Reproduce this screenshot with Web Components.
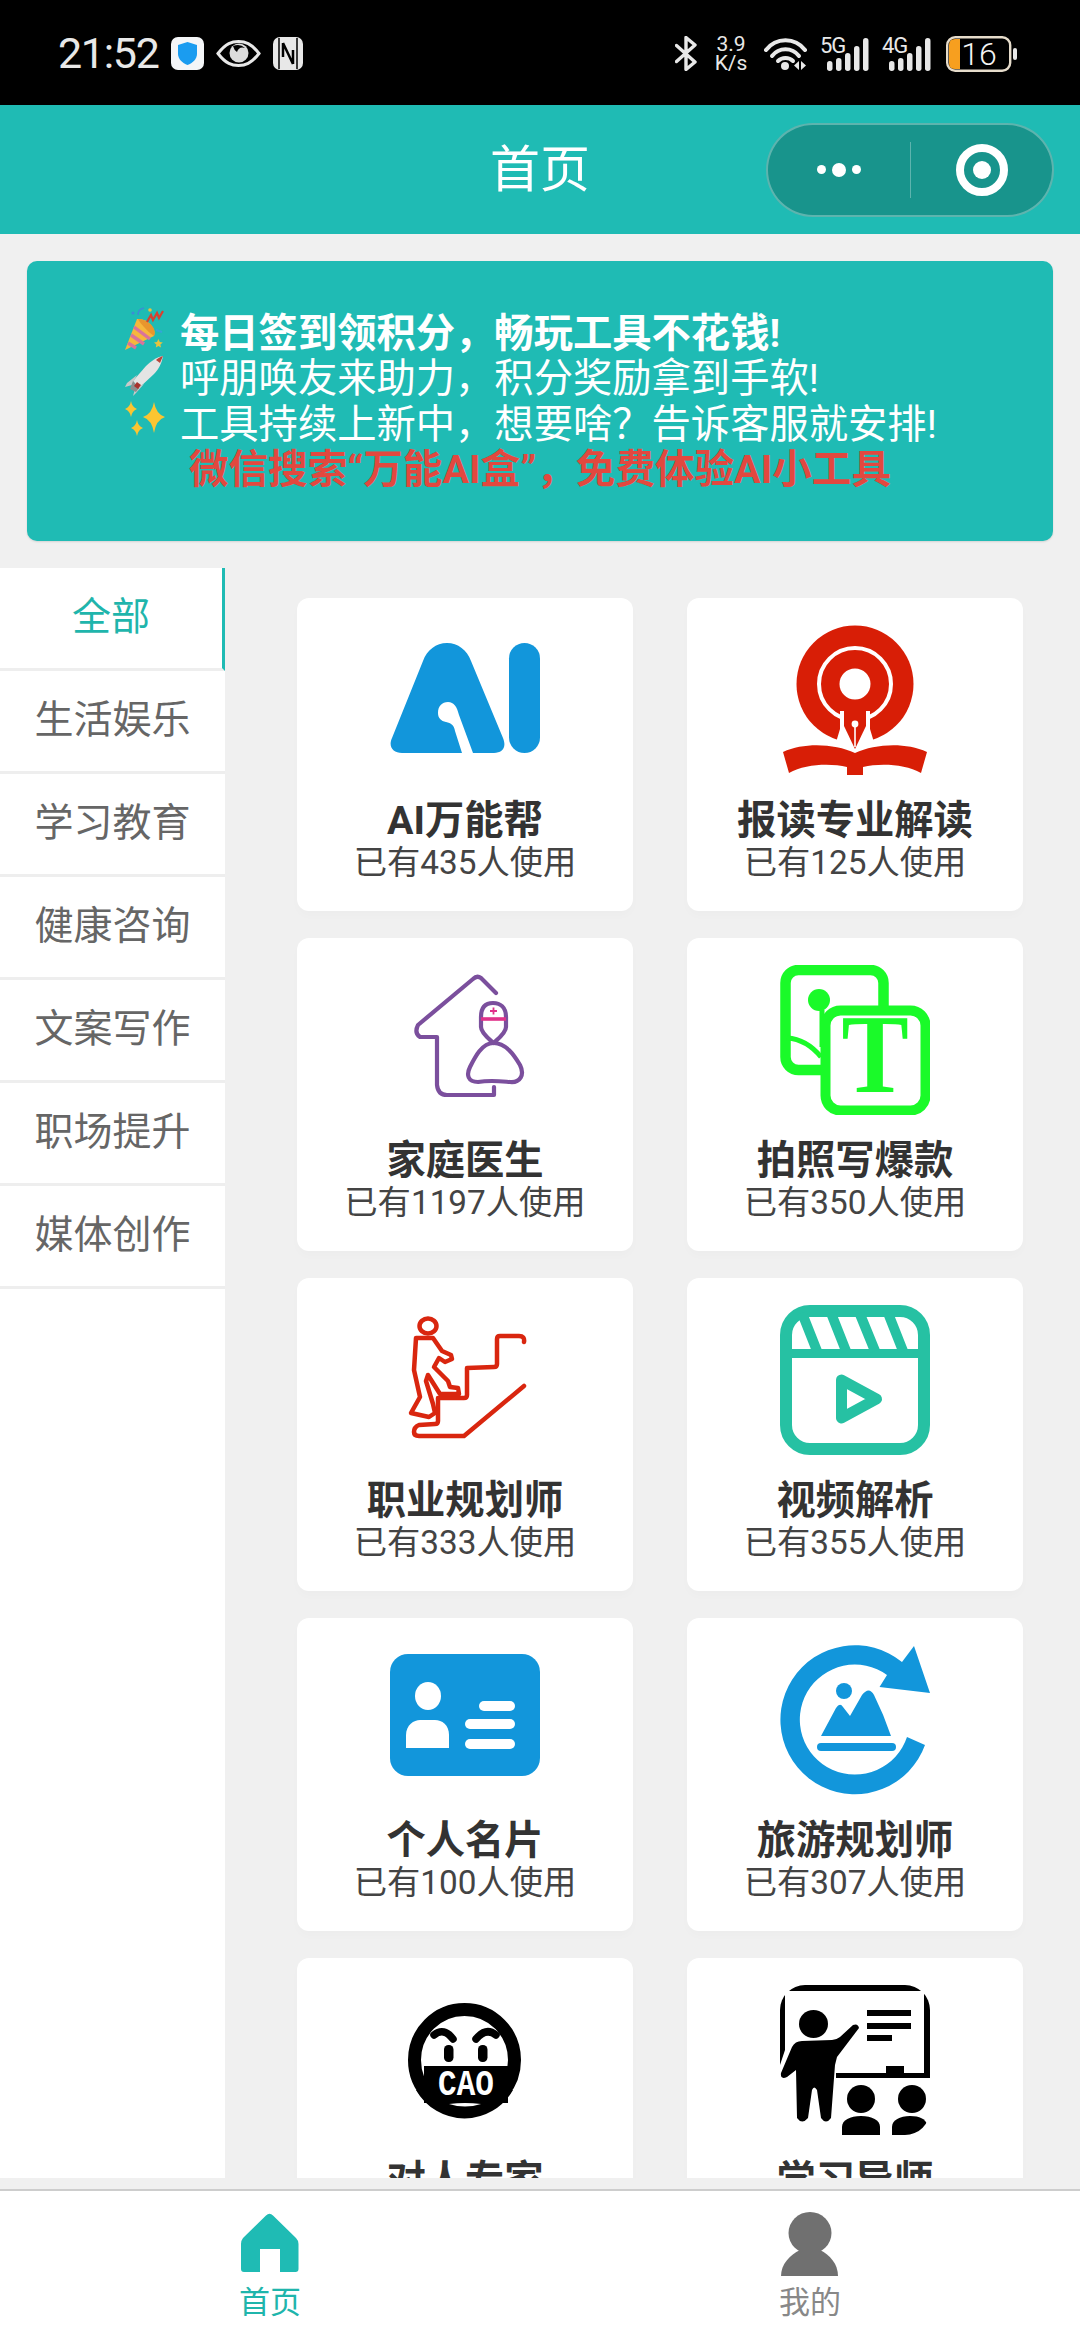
<!DOCTYPE html>
<html lang="zh">
<head>
<meta charset="utf-8">
<title>首页</title>
<style>
    html, body { margin: 0; padding: 0; }
    body { width: 1080px; height: 2340px; overflow: hidden; display: flex; flex-direction: column; background: #f0f0f0; font-family: Roboto, "Noto Sans CJK SC", sans-serif; }
    .stack { position: relative; display: block; width: 150px; height: 150px; }
    .stack svg { display: block; }
    .stack span { position: absolute; text-align: center; white-space: nowrap; }
    .big-t { left: 45px; top: 28px; width: 100px; font: 700 112px/122px "Liberation Serif", serif; color: #1afa29; transform: scaleX(0.9); }
    .cao { left: 34px; top: 82px; width: 84px; font: 700 31px/35px "Liberation Mono", monospace; color: #fff; transform: scaleY(1.2); }
</style>
</head>
<body>
<status-bar></status-bar>
<nav-bar heading="首页"></nav-bar>

<promo-banner>
    <promo-line strong>
        <svg slot="emoji" width="41" height="46" viewBox="0 0 41 46">
            <path d="M1 44 L13 13 Q21 12 27 19 Q32 25 30 30 Z" fill="#f6b73c"/>
            <path d="M4 37 L12 42 M7 29 L20 38 M10 21 L26 33" stroke="#d9739b" stroke-width="3.4" fill="none"/>
            <path d="M14 13 Q23 13 29 21 Q32 26 30 30 Q24 26 20 21 Q16 17 14 13Z" fill="#e8962e"/>
            <path d="M23 16 L27 9 L29 14 L33 7 L35 12 L39 5" stroke="#d8402f" stroke-width="2.2" fill="none"/>
            <path d="M14 9 Q14 3 20 2" stroke="#3c8dd6" stroke-width="1.6" fill="none"/>
            <circle cx="26" cy="4" r="1.8" fill="#e9c33c"/><circle cx="9" cy="7" r="1.6" fill="#3c8dd6"/>
            <path d="M32 24 L38 26" stroke="#35a4d8" stroke-width="2"/>
            <path d="M33 36 l1.4 -3 1.4 3 3 .6 -2.4 2 .6 3 -2.6 -1.6 -2.6 1.6 .6 -3 -2.4 -2z" fill="#e9c33c"/>
        </svg>
        每日签到领积分，畅玩工具不花钱!
    </promo-line>
    <promo-line>
        <svg slot="emoji" width="41" height="46" viewBox="0 0 41 46">
            <path d="M39 4 C33 5 27 9 22 14 L9 29 L15 36 L30 22 C35 17 38 10 39 4Z" fill="#e4e4e4"/>
            <path d="M39 4 C36 5 34 6 32 8 L36 11 C37 9 38 6 39 4Z" fill="#b9463c"/>
            <path d="M13 23 L3 31 L1 35 L8 33 Z M20 32 L12 41 L9 44 L11 37 Z" fill="#c9c9c9"/>
            <path d="M9 29 L6 37 L12 40 L15 36 Z" fill="#8d8d8d"/>
            <path d="M13 30 L17 33 L14 37 L10 34Z" fill="#a8322c"/>
        </svg>
        呼朋唤友来助力，积分奖励拿到手软!
    </promo-line>
    <promo-line>
        <svg slot="emoji" width="41" height="46" viewBox="0 0 41 46">
            <path d="M30 5 Q32 17 41 20 Q32 23 30 36 Q28 23 19 20 Q28 17 30 5Z" fill="#fbc531"/>
            <path d="M7 4 Q8 10 13 12 Q8 14 7 20 Q6 14 1 12 Q6 10 7 4Z" fill="#fbc531"/>
            <path d="M13 23 Q14 29 19 31 Q14 33 13 39 Q12 33 7 31 Q12 29 13 23Z" fill="#fbc531"/>
        </svg>
        工具持续上新中，想要啥？告诉客服就安排!
    </promo-line>
    <promo-line ad>微信搜索“万能AI盒”，免费体验AI小工具</promo-line>
</promo-banner>

<main-area>
    <side-menu slot="side">
        <side-item active>全部</side-item>
        <side-item>生活娱乐</side-item>
        <side-item>学习教育</side-item>
        <side-item>健康咨询</side-item>
        <side-item>文案写作</side-item>
        <side-item>职场提升</side-item>
        <side-item>媒体创作</side-item>
    </side-menu>

    <tool-card name="AI万能帮" count="435">
        <svg slot="icon" width="150" height="150" viewBox="0 0 150 150">
            <path d="M33 36 C37 25 46 18 57 18 C68 18 77 25 81 36 L113 113 C117 123 112 128 104 128 L84 128 L69 128 L12 128 C3 128 -2 122 2 113 Z" fill="#1296db"/>
            <path d="M48 88 C48 81 52 77 58 77 C64 77 67 82 69 90 L83 128 L72 128 L65 106 C64 100 61 98 56 97 C51 96 48 93 48 88Z" fill="#fff"/>
            <rect x="119" y="18" width="31" height="110" rx="15.5" fill="#1296db"/>
        </svg>
    </tool-card>
    <tool-card name="报读专业解读" count="125">
        <svg slot="icon" width="150" height="150" viewBox="0 0 150 150">
            <circle cx="75" cy="59" r="58.500" fill="#d81e06"/>
            <circle cx="75" cy="59" r="36" fill="none" stroke="#fff" stroke-width="4"/>
            <circle cx="75" cy="59" r="15.500" fill="#fff"/>
            <path d="M60 86 L90 86 L90 104 L96 124 L54 124 L60 104Z" fill="#fff"/>
            <path d="M64 84 L86 84 L86 101 L75 124 L64 101Z" fill="#d81e06"/>
            <circle cx="75" cy="99" r="3.400" fill="#fff"/>
            <path d="M75 99 L75 122" stroke="#fff" stroke-width="1.600"/>
            <path d="M3 127 C25 117 55 119 75 128 C95 119 125 117 147 127 L141 148 C125 139 100 138 83 142 L83 150 L67 150 L67 142 C50 138 25 139 9 148Z" fill="#d81e06"/>
        </svg>
    </tool-card>
    <tool-card name="家庭医生" count="1197">
        <svg slot="icon" width="150" height="150" viewBox="0 0 150 150">
            <g fill="none" stroke="#7b4f9d" stroke-width="4.200" stroke-linecap="round" stroke-linejoin="round">
                <path d="M106 28 L91 13 Q87 10 83 14 L28 60 Q24 68 30 72 L47 72 L47 120 Q48 130 57 130 L104 130 L104 122"/>
                <path d="M91 52 C91 42 96 38 103 38 C110 38 116 42 116 52 L116 62 C116 68 108 74 103.500 78 C99 74 91 68 91 62Z"/>
                <path d="M103.500 78 C92 78 85 92 80 102 C76 110 78 117 88 117 C100 115 108 116 120 117 C130 118 135 110 130 100 C124 90 116 78 103.500 78Z"/>
            </g>
            <path d="M91 54 H116" stroke="#e0328a" stroke-width="3.600"/>
            <path d="M103.500 42.500 V49.500 M100 46 H107" stroke="#e0328a" stroke-width="1.800"/>
        </svg>
    </tool-card>
    <tool-card name="拍照写爆款" count="350">
        <span slot="icon" class="stack">
            <svg width="150" height="150" viewBox="0 0 150 150">
                <rect x="5.500" y="5" width="98" height="100" rx="13" fill="#fff" stroke="#1afa29" stroke-width="10.500"/>
                <circle cx="39" cy="35" r="11" fill="#1afa29"/>
                <path d="M42 45 V82 M7 73 C22 74 33 82 41 92" fill="none" stroke="#1afa29" stroke-width="5"/>
                <rect x="45.500" y="45.500" width="100" height="100" rx="15" fill="#fff" stroke="#1afa29" stroke-width="10"/>
            </svg>
            <span class="big-t">T</span>
        </span>
    </tool-card>
    <tool-card name="职业规划师" count="333">
        <svg slot="icon" width="150" height="150" viewBox="0 0 150 150">
            <g fill="none" stroke="#d9260f" stroke-width="4.500" stroke-linecap="round" stroke-linejoin="round">
                <ellipse cx="38" cy="21" rx="8.500" ry="7.500"/>
                <path d="M134 37 Q135 31 129 31 L110 31 Q107 31 107 34 L107 59 Q107 62 104 62 L77 63 L77 90 Q77 93 74 93 L48 93 L48 116 Q48 119 45 119 L29 120 Q24 122 24 127 Q24 131 29 131 L74 131 L134 81"/>
                <path d="M26 33 L43 33 L52 46 L61 50 L62 54 L55 57 L49 53 L44 62 L58 76 L60 82 L68 83 L69 89 L50 89 L38 70 L36 76 L43 99 L45 108 L39 112 L21 108 L30 92 L24 65 Z"/>
            </g>
        </svg>
    </tool-card>
    <tool-card name="视频解析" count="355">
        <svg slot="icon" width="150" height="150" viewBox="0 0 150 150">
            <g fill="none" stroke="#26c1a3" stroke-linejoin="round">
                <rect x="6" y="6" width="138" height="138" rx="24" stroke-width="12"/>
                <path d="M6 48.500 H144" stroke-width="9"/>
                <path d="M22 8 L37 46 M51 8 L66 46 M79.500 8 L95 46 M108 8 L123 46" stroke-width="10"/>
                <path d="M61.500 75 L96.500 94 L61.500 113 Z" stroke-width="11"/>
            </g>
        </svg>
    </tool-card>
    <tool-card name="个人名片" count="100">
        <svg slot="icon" width="150" height="150" viewBox="0 0 150 150">
            <rect x="0" y="9" width="150" height="122" rx="18" fill="#1296db"/>
            <ellipse cx="38" cy="51" rx="13" ry="14" fill="#fff"/>
            <path d="M16 103 V90 C16 80 24 75 30 75 H45 C52 75 59 80 59 90 V103Z" fill="#fff"/>
            <rect x="89" y="56" width="36" height="10" rx="5" fill="#fff"/>
            <rect x="75" y="74" width="50" height="10" rx="5" fill="#fff"/>
            <rect x="75" y="94" width="50" height="10" rx="5" fill="#fff"/>
        </svg>
    </tool-card>
    <tool-card name="旅游规划师" count="307">
        <svg slot="icon" width="150" height="150" viewBox="0 0 150 150">
            <path d="M145 100 A74.500 74.500 0 1 1 122 17 L134 1 L150 48 L99.500 42 L107 30 A55 55 0 1 0 127 92Z" fill="#1296db"/>
            <ellipse cx="64" cy="46" rx="8" ry="8" fill="#1296db"/>
            <path d="M41 91 L56 63 Q60 57 63 62 L70 71 L82 50 Q89 41 94 50 Q104 70 111 91Z" fill="#1296db"/>
            <rect x="37" y="98" width="79" height="8" rx="4" fill="#1296db"/>
        </svg>
    </tool-card>
    <tool-card name="对人专家" count="0">
        <span slot="icon" class="stack">
            <svg width="150" height="150" viewBox="0 0 150 150">
                <ellipse cx="74.500" cy="75" rx="50" ry="50.500" fill="none" stroke="#000" stroke-width="13"/>
                <path d="M26 105 A56 57 0 0 0 123 105Z" fill="#000"/>
                <rect x="34" y="81" width="84" height="37" fill="#000"/>
                <path d="M59 119 Q75 124 91 119 Q75 117 59 119Z" fill="#fff"/>
                <path d="M44 50 Q54 42 63 54 M106 50 Q96 42 86 54" fill="none" stroke="#000" stroke-width="7.500" stroke-linecap="round"/>
                <rect x="54" y="60" width="9.500" height="17" rx="4.500" fill="#000"/>
                <rect x="88" y="60" width="9.500" height="17" rx="4.500" fill="#000"/>
            </svg>
            <span class="cao">CAO</span>
        </span>
    </tool-card>
    <tool-card name="学习导师" count="0">
        <svg slot="icon" width="150" height="150" viewBox="0 0 150 150" style="border-radius:25px;overflow:hidden">
            <path d="M0 0 H150 V93 H56 V88 H106 V81 H124 V88 H144 V6 H5 V65 L0 80Z" fill="#000"/>
            <rect x="87" y="25" width="44" height="6"/><rect x="87" y="38" width="44" height="6"/><rect x="87" y="50" width="25" height="6"/>
            <ellipse cx="33.500" cy="39" rx="14.500" ry="14"/>
            <path d="M22 56 L52 55 Q56 55 60 52 L73 40 Q78 38 79 43 L57 72 L55 80 L51 133 Q46 140 41 133 L37 105 Q34 100 32 105 L28 133 Q22 140 17 133 L16 85 L7 92 Q0 95 1 88 L12 62 Q15 56 22 56Z"/>
            <ellipse cx="81" cy="114" rx="14" ry="14"/><ellipse cx="132" cy="114" rx="14" ry="14"/>
            <path d="M62 150 V142 C62 135 70 131 81 131 C92 131 100 135 100 142 V150Z"/>
            <path d="M112 150 V142 C112 135 120 131 130 131 C140 131 145 134 147 139 L138 150Z"/>
        </svg>
    </tool-card>
</main-area>

<tab-bar>
    <tab-item active label="首页">
        <svg slot="icon" width="64" height="64" viewBox="0 0 64 64">
            <path d="M28 3.500 Q31.500 0 35 3.500 L58 26 Q60.500 28.500 60.500 32 L60.500 57 Q60.500 60 57.500 60 L42 60 L42 37 L22 37 L22 60 L6 60 Q3 60 3 57 L3 32 Q3 28.500 5 26Z" fill="#1fbbb4"/>
        </svg>
    </tab-item>
    <tab-item label="我的">
        <svg slot="icon" width="64" height="64" viewBox="0 0 64 64">
            <ellipse cx="32" cy="21" rx="21.500" ry="21" fill="#707070"/>
            <path d="M3 64 C3 52 12 43 22 38 L42 38 C52 43 60 52 60 64Z" fill="#707070"/>
        </svg>
    </tab-item>
</tab-bar>

<script>
const FONT = `Roboto, "Noto Sans CJK SC", sans-serif`;
const TEAL = '#1fbbb4';

class StatusBar extends HTMLElement {
    constructor() {
        super();
        this.attachShadow({ mode: 'open' });
    }

    signal(label) {
        return `
        <span class="signal">
            <b>${label}</b>
            <svg width="50" height="34" viewBox="0 0 50 34">
                <rect x="7" y="24" width="5.500" height="10" rx="2.700" fill="#e8e8e8"/>
                <rect x="16" y="21" width="5.500" height="13" rx="2.700" fill="#e8e8e8"/>
                <rect x="25" y="16" width="5.500" height="18" rx="2.700" fill="#e8e8e8"/>
                <rect x="34" y="9" width="5.500" height="25" rx="2.700" fill="#e8e8e8"/>
                <rect x="43" y="1" width="5.500" height="33" rx="2.700" fill="#e8e8e8"/>
            </svg>
        </span>`;
    }

    connectedCallback() {
        this.shadowRoot.innerHTML = `
        <style>
            :host { display: flex; flex: none; height: 105px; background: #000; color: #e8e8e8; font-family: Roboto, sans-serif; align-items: flex-start; justify-content: space-between; padding: 36px 63px 0 58px; box-sizing: border-box; }
            .side { display: flex; align-items: center; height: 35px; }
            .left { gap: 12px; }
            .right { gap: 13px; }
            .time { font-size: 43px; font-weight: 400; line-height: 35px; letter-spacing: -1.300px; }
            .speed { width: 34px; font-size: 21px; line-height: 19px; text-align: center; margin: 0 3px 0 2px; }
            .signal { position: relative; display: block; width: 50px; height: 34px; }
            .signal b { position: absolute; left: 0; top: -2px; font-size: 22px; font-weight: 400; line-height: 22px; letter-spacing: -1px; }
            .battery { position: relative; display: block; width: 71px; height: 36px; margin-left: 1px; }
            .battery b { position: absolute; left: 15px; top: 0; width: 36px; text-align: center; font-size: 32px; font-weight: 300; line-height: 36px; color: #f4f4f4; }
            svg { display: block; }
        </style>
        <div class="side left">
            <span class="time">21:52</span>
            <svg width="33" height="33" viewBox="0 0 33 33">
                <rect width="33" height="33" rx="7" fill="#f4f6f8"/>
                <path d="M16.500 5 L26 8 V17 C26 22 21.500 26 16.500 28 C11.500 26 7 22 7 17 V8Z" fill="#1a9cf0"/>
            </svg>
            <svg width="45" height="27" viewBox="0 0 45 27">
                <path d="M2 13.500 C10 3 16 1.500 22.500 1.500 C29 1.500 35 3 43 13.500 C35 24 29 25.500 22.500 25.500 C16 25.500 10 24 2 13.500Z" fill="none" stroke="#e8e8e8" stroke-width="3"/>
                <circle cx="23" cy="13" r="9.500" fill="#dcdcdc"/>
                <path d="M17 6 Q24 3 29 8 Q23 6 21 12 Q18 10 17 6Z" fill="#000"/>
            </svg>
            <svg width="30" height="33" viewBox="0 0 30 33">
                <rect width="30" height="33" rx="7" fill="#e8e8e8"/>
                <path d="M6 1 V32 M24 1 V32" stroke="#000" stroke-width="1.500"/>
                <path d="M10 6 L20 27 M10 6 V20 M20 27 V13" stroke="#000" stroke-width="2.500" fill="none"/>
            </svg>
        </div>
        <div class="side right">
            <svg width="22" height="35" viewBox="0 0 22 35" style="margin-right:2px">
                <path d="M1.500 9.500 L20 26 L11 33.500 V1.500 L20 9 L1.500 25.500" fill="none" stroke="#e8e8e8" stroke-width="3.400" stroke-linejoin="round" stroke-linecap="round"/>
            </svg>
            <div class="speed"><div>3.9</div><div>K/s</div></div>
            <svg width="43" height="34" viewBox="0 0 43 34">
                <g fill="none" stroke="#e8e8e8" stroke-width="4" stroke-linecap="round">
                    <path d="M2 13 C12 0 31 0 41 13"/><path d="M8 19 C15 10 28 10 35 19"/><path d="M14 24 C18 20 25 20 29 24"/>
                </g>
                <circle cx="21" cy="29" r="4" fill="#e8e8e8"/>
                <path d="M35 24 V33 L30 28.500Z M37 24 V33 L42 28.500Z" fill="#e8e8e8"/>
            </svg>
            <span style="display:flex;gap:12px">${this.signal('5G')}${this.signal('4G')}</span>
            <span class="battery">
                <svg width="71" height="36" viewBox="0 0 71 36">
                    <rect x="1.200" y="1.200" width="63" height="33.600" rx="8" fill="none" stroke="#e6dccb" stroke-width="2.400"/>
                    <path d="M14 3 V33 H9 Q3 33 3 27 V9 Q3 3 9 3Z" fill="#f79f1f"/>
                    <rect x="67" y="12" width="4" height="12" rx="2" fill="#e8e8e8"/>
                </svg>
                <b>16</b>
            </span>
        </div>`;
    }
}
customElements.define('status-bar', StatusBar);

class NavBar extends HTMLElement {
    constructor() {
        super();
        this.attachShadow({ mode: 'open' });
    }

    connectedCallback() {
        this.shadowRoot.innerHTML = `
        <style>
            :host { display: grid; flex: none; grid-template-columns: 1fr auto 1fr; align-items: center; height: 129px; background: ${TEAL}; color: #fff; padding: 0 26px; box-sizing: border-box; font-family: ${FONT}; }
            h1 { grid-column: 2; margin: 0; font-size: 50px; font-weight: 400; line-height: 60px; }
            .capsule { grid-column: 3; justify-self: end; display: flex; align-items: center; width: 288px; height: 94px; box-sizing: border-box; border: 2px solid rgba(255,255,255,0.3); border-radius: 47px; background: #18948c; }
            .menu, .close { display: flex; align-items: center; justify-content: center; }
            .menu { width: 142px; height: 56px; gap: 6px; border-right: 1px solid rgba(255,255,255,0.3); }
            .close { flex: 1; }
            .dot { width: 9px; height: 9px; border-radius: 50%; background: #fff; }
            .dot.big { width: 14px; height: 14px; }
            .target { width: 52px; height: 52px; border-radius: 50%; border: 8px solid #fff; box-sizing: border-box; display: flex; align-items: center; justify-content: center; }
            .target i { display: block; width: 18px; height: 18px; border-radius: 50%; background: #fff; }
        </style>
        <h1>${this.getAttribute('heading')}</h1>
        <div class="capsule">
            <div class="menu"><span class="dot"></span><span class="dot big"></span><span class="dot"></span></div>
            <div class="close"><div class="target"><i></i></div></div>
        </div>`;
    }
}
customElements.define('nav-bar', NavBar);

class PromoBanner extends HTMLElement {
    constructor() {
        super();
        this.attachShadow({ mode: 'open' });
    }

    connectedCallback() {
        this.shadowRoot.innerHTML = `
        <style>
            :host { display: flex; flex: none; flex-direction: column; justify-content: center; height: 280px; margin: 27px 27px 27px; background: ${TEAL}; border-radius: 10px; box-sizing: border-box; padding-bottom: 7px; box-shadow: 0 1px 2px rgba(0,0,0,0.12); }
        </style>
        <slot></slot>`;
    }
}
customElements.define('promo-banner', PromoBanner);

class PromoLine extends HTMLElement {
    constructor() {
        super();
        this.attachShadow({ mode: 'open' });
    }

    connectedCallback() {
        this.shadowRoot.innerHTML = `
        <style>
            :host { display: flex; align-items: center; gap: 15px; padding-left: 97px; height: 45.5px; color: #fff; font-family: ${FONT}; font-size: 39.3px; white-space: nowrap; }
            :host([strong]) { font-weight: 700; }
            :host([ad]) { justify-content: center; padding-left: 0; color: #e2483f; font-size: 39.6px; font-weight: 700; }
            ::slotted(svg) { flex: none; }
        </style>
        <slot name="emoji"></slot><slot></slot>`;
    }
}
customElements.define('promo-line', PromoLine);

class MainArea extends HTMLElement {
    constructor() {
        super();
        this.attachShadow({ mode: 'open' });
    }

    connectedCallback() {
        this.shadowRoot.innerHTML = `
        <style>
            :host { display: flex; flex: 1; min-height: 0; overflow: hidden; }
            .grid { display: grid; grid-template-columns: 336px 336px; grid-auto-rows: 313px; gap: 27px 54px; padding: 30px 0 0 72px; align-content: start; }
        </style>
        <slot name="side"></slot>
        <div class="grid"><slot></slot></div>`;
    }
}
customElements.define('main-area', MainArea);

class SideMenu extends HTMLElement {
    constructor() {
        super();
        this.attachShadow({ mode: 'open' });
    }

    connectedCallback() {
        this.shadowRoot.innerHTML = `
        <style>
            :host { display: flex; flex: none; flex-direction: column; width: 225px; background: #fff; }
        </style>
        <slot></slot>`;
    }
}
customElements.define('side-menu', SideMenu);

class SideItem extends HTMLElement {
    constructor() {
        super();
        this.attachShadow({ mode: 'open' });
    }

    connectedCallback() {
        this.shadowRoot.innerHTML = `
        <style>
            :host { display: flex; flex: none; align-items: center; justify-content: center; height: 103px; box-sizing: border-box; border-bottom: 3px solid #eeeeee; color: #666; font-family: ${FONT}; font-size: 39px; padding-bottom: 10px; }
            :host([active]) { color: #1fb5ac; border-right: 3px solid ${TEAL}; }
        </style>
        <slot></slot>`;
    }
}
customElements.define('side-item', SideItem);

class ToolCard extends HTMLElement {
    constructor() {
        super();
        this.attachShadow({ mode: 'open' });
    }

    connectedCallback() {
        this.shadowRoot.innerHTML = `
        <style>
            :host { display: flex; flex-direction: column; align-items: center; height: 313px; box-sizing: border-box; padding-top: 27px; background: #fff; border-radius: 12px; box-shadow: 0 5px 8px rgba(0,0,0,0.015); font-family: ${FONT}; }
            .icon { width: 150px; height: 150px; flex: none; }
            ::slotted(svg) { display: block; }
            .name { margin-top: 23px; font-size: 39.3px; line-height: 46px; font-weight: 700; color: #333; }
            .count { font-size: 33.3px; line-height: 38px; color: #444; }
        </style>
        <div class="icon"><slot name="icon"></slot></div>
        <div class="name">${this.getAttribute('name')}</div>
        <div class="count">已有${this.getAttribute('count')}人使用</div>`;
    }
}
customElements.define('tool-card', ToolCard);

class TabBar extends HTMLElement {
    constructor() {
        super();
        this.attachShadow({ mode: 'open' });
    }

    connectedCallback() {
        this.shadowRoot.innerHTML = `
        <style>
            :host { display: grid; flex: none; grid-template-columns: 1fr 1fr; height: 151px; margin-top: 11px; box-sizing: border-box; background: #fff; border-top: 2px solid #cdcdcd; }
        </style>
        <slot></slot>`;
    }
}
customElements.define('tab-bar', TabBar);

class TabItem extends HTMLElement {
    constructor() {
        super();
        this.attachShadow({ mode: 'open' });
    }

    connectedCallback() {
        this.shadowRoot.innerHTML = `
        <style>
            :host { display: flex; flex-direction: column; align-items: center; padding-top: 21px; color: #888; font-family: ${FONT}; font-size: 31px; }
            :host([active]) { color: #1fb5ac; }
            ::slotted(svg) { display: block; }
            .label { margin-top: 7px; line-height: 40px; }
        </style>
        <slot name="icon"></slot>
        <div class="label">${this.getAttribute('label')}</div>`;
    }
}
customElements.define('tab-item', TabItem);
</script>
</body>
</html>
